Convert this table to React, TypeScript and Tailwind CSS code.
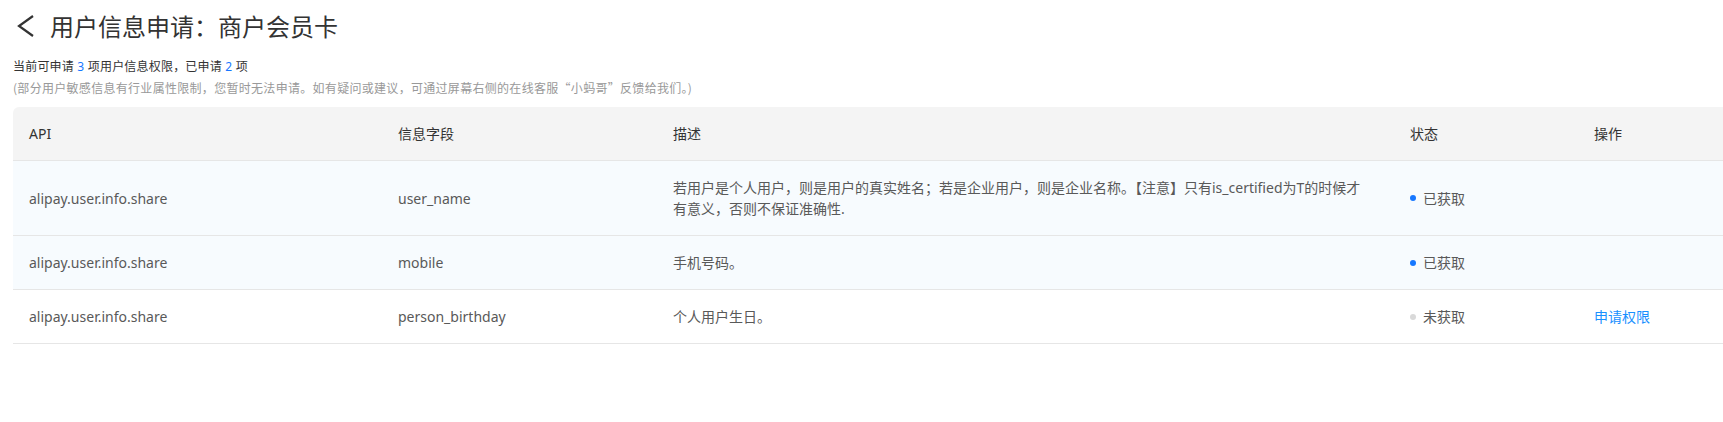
import React from "react";

const rows = [
  {
    api: "alipay.user.info.share",
    field: "user_name",
    desc: "若用户是个人用户，则是用户的真实姓名；若是企业用户，则是企业名称。【注意】只有is_certified为T的时候才有意义，否则不保证准确性.",
    got: true,
    tint: true,
  },
  { api: "alipay.user.info.share", field: "mobile", desc: "手机号码。", got: true, tint: true },
  { api: "alipay.user.info.share", field: "person_birthday", desc: "个人用户生日。", got: false, tint: false },
];

const cols = "grid grid-cols-[369px_275px_737px_184px_145px]";

export default function App() {
  return (
    <div
      className="w-full h-[422px] bg-white overflow-hidden text-[#333]"
      style={{ fontFamily: '"Noto Sans", "Noto Sans CJK SC", sans-serif' }}
    >
      <div className="flex items-center h-[32px] mt-[11px] pl-[15px]">
        <svg width="20" height="24" viewBox="0 0 20 24" className="mr-[15px] mt-[-3px]">
          <path d="M18 2 L4 12 L18 22" fill="none" stroke="#333" strokeWidth="2.2" />
        </svg>
        <h1 className="text-[24px] leading-[32px] font-normal text-[#333]">用户信息申请：商户会员卡</h1>
      </div>
      <div className="pl-[13px] mt-[14px] text-[12px] leading-[20px] text-[#333] tracking-[0.2px]">
        当前可申请 <span className="text-[#1677ff]">3</span> 项用户信息权限，已申请{" "}
        <span className="text-[#1677ff]">2</span> 项
      </div>
      <div
        className="pl-[13px] mt-[1px] text-[12px] leading-[20px] text-[#999] tracking-[0.3px]"
        style={{ fontFamily: '"Noto Sans CJK SC", sans-serif' }}
      >
        (部分用户敏感信息有行业属性限制，您暂时无法申请。如有疑问或建议，可通过屏幕右侧的在线客服“小蚂哥”反馈给我们。)
      </div>
      <div className="ml-[13px] mt-[9px] w-[1710px] text-[14px]">
        <div className={`${cols} bg-[#f4f4f4] rounded-tl-[6px] border-b border-[#e6e6e6] text-[#333]`}>
          {["API", "信息字段", "描述", "状态", "操作"].map((h) => (
            <div key={h} className="px-4 py-4 leading-[21px]">
              {h}
            </div>
          ))}
        </div>
        {rows.map((r, i) => (
          <div
            key={i}
            className={`${cols} items-center border-b border-[#e6e6e6] text-[#595959] ${
              r.tint ? "bg-[#f7fbfe]" : "bg-white"
            }`}
          >
            <div className="px-4 py-4 leading-[21px]">{r.api}</div>
            <div className="px-4 py-4 leading-[21px]">{r.field}</div>
            <div className="px-4 py-4 leading-[21px]">
              <div className="max-w-[694px]">{r.desc}</div>
            </div>
            <div className="px-4 py-4 leading-[21px] flex items-center">
              <span
                className={`inline-block w-[6px] h-[6px] rounded-full mr-[7px] ${
                  r.got ? "bg-[#1677ff]" : "bg-[#d9d9d9]"
                }`}
              />
              {r.got ? "已获取" : "未获取"}
            </div>
            <div className="px-4 py-4 leading-[21px]">
              {!r.got && <a className="text-[#1890ff] cursor-pointer">申请权限</a>}
            </div>
          </div>
        ))}
      </div>
    </div>
  );
}
